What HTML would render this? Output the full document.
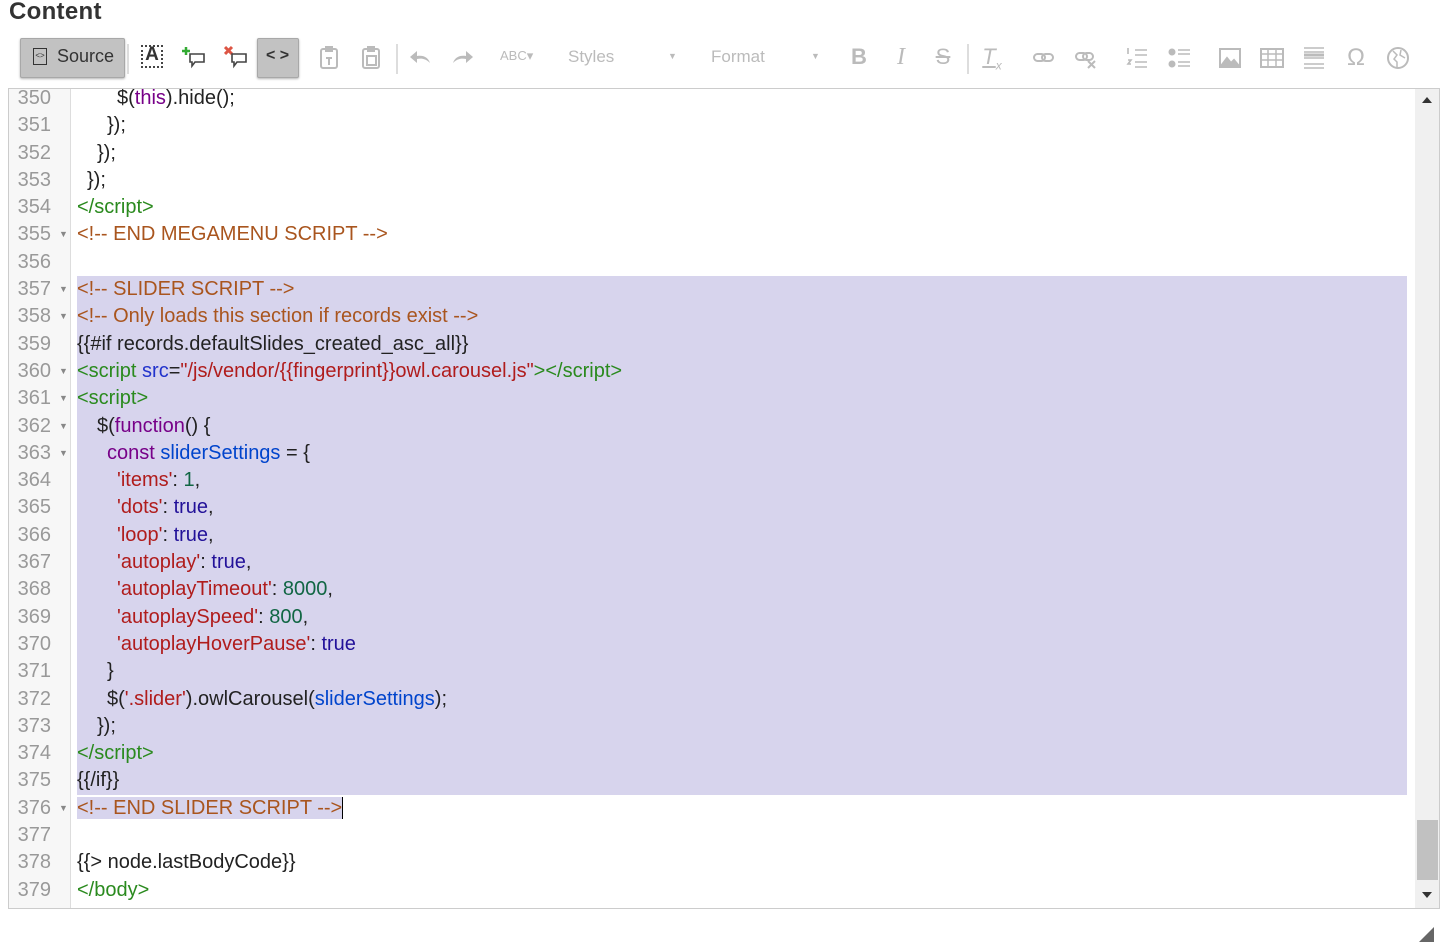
<!DOCTYPE html>
<html><head><meta charset="utf-8"><style>
body{margin:0;width:1450px;height:944px;background:#fff;font-family:"Liberation Sans",sans-serif;position:relative;overflow:hidden}
h1{position:absolute;left:9px;top:-2px;margin:0;font-size:24px;font-weight:bold;color:#333;letter-spacing:.3px}
.btn{position:absolute;top:38px;height:38px;background:#c2c2c2;border:1px solid #a8a8a8;border-radius:2px;box-shadow:0 1px 2px rgba(0,0,0,.3)}
.ic{position:absolute;top:44px;font-size:20px;color:#bbb;text-align:center;width:30px}
svg.s{position:absolute;top:45px;width:26px;height:26px;fill:none;stroke:#bbb;stroke-width:2}
.sep{position:absolute;top:44px;width:2px;height:30px;background:#ddd}
.ed{position:absolute;left:8px;top:88px;width:1430px;height:819px;border:1px solid #ccc;overflow:hidden}
.gut{position:absolute;left:0;top:0;width:61px;height:100%;background:#f7f7f7;border-right:1px solid #ddd}
.code{position:absolute;left:0;top:-4px;width:1398px}
.l{height:27.3px;line-height:27.3px;font-size:20px;white-space:pre;position:relative;color:#222}
.n{position:absolute;left:0;width:42px;text-align:right;color:#999}
.f{position:absolute;left:50px;font-size:9px;color:#888}
.t{position:absolute;left:68px}
.sel{background:#d7d4ed}
.cm{color:#a9551e}.tg{color:#2a8a1e}.at{color:#2233cc}.st{color:#b01c1c}.kw{color:#770088}.df{color:#0044cc}.nm{color:#116644}.bl{color:#221199}
.sb{position:absolute;right:0;top:0;width:24px;height:100%;background:#f0f0f0}
</style></head><body>
<h1>Content</h1>
<div class="btn" style="left:20px;width:103px"></div>
<div style="position:absolute;left:33px;top:48px;width:14px;height:17px;border:1.5px solid #333;box-sizing:border-box;font-size:8px;line-height:14px;text-align:center;color:#333">&lt;&gt;</div>
<div style="position:absolute;left:57px;top:46px;font-size:18px;color:#333">Source</div>
<div class="sep" style="left:127px"></div>
<div style="position:absolute;left:141px;top:45px;width:22px;height:23px;border:2px dotted #444;box-sizing:border-box"></div>
<div style="position:absolute;left:141px;top:44px;width:22px;text-align:center;font-size:19px;font-weight:bold;color:#333">A</div>
<svg class="s" style="left:182px" viewBox="0 0 26 26"><path d="M4 2v8M0 6h8" stroke="#3a3" stroke-width="2.5"/><path d="M8 9h14v8h-9l-3 4v-4H8z" stroke="#444" stroke-width="1.6"/></svg>
<svg class="s" style="left:224px" viewBox="0 0 26 26"><path d="M1 2l7 7M8 2l-7 7" stroke="#d54" stroke-width="3"/><path d="M8 9h14v8h-9l-3 4v-4H8z" stroke="#444" stroke-width="1.6"/></svg>
<div class="btn" style="left:257px;width:40px"></div>
<div style="position:absolute;left:266px;top:47px;font-size:16px;font-weight:bold;color:#333">&lt; &gt;</div>
<svg class="s" style="left:317px" viewBox="0 0 26 26"><rect x="4" y="4" width="16" height="19" rx="2"/><rect x="9" y="2" width="6" height="4"/><path d="M9 13h6M12 13v7"/></svg>
<svg class="s" style="left:359px" viewBox="0 0 26 26"><rect x="4" y="4" width="16" height="19" rx="2"/><rect x="9" y="2" width="6" height="4"/><rect x="8" y="11" width="9" height="9"/></svg>
<div class="sep" style="left:396px"></div>
<svg class="s" style="left:408px" viewBox="0 0 26 26"><path d="M22 18c-2-6-7-8-13-7V6L2 12l7 6v-4c5-1 9 0 13 4z" fill="#bbb" stroke="none"/></svg>
<svg class="s" style="left:449px" viewBox="0 0 26 26"><path d="M4 18c2-6 7-8 13-7V6l7 6-7 6v-4c-5-1-9 0-13 4z" fill="#bbb" stroke="none"/></svg>
<div class="ic" style="left:500px;font-size:13px;top:48px">ABC▾</div>
<div style="position:absolute;left:568px;top:47px;font-size:17px;color:#bbb">Styles</div>
<div style="position:absolute;left:668px;top:51px;font-size:9px;color:#bbb">▼</div>
<div style="position:absolute;left:711px;top:47px;font-size:17px;color:#bbb">Format</div>
<div style="position:absolute;left:811px;top:51px;font-size:9px;color:#bbb">▼</div>
<div class="ic" style="left:844px;font-weight:bold;font-size:22px">B</div>
<div class="ic" style="left:886px;font-style:italic;font-family:'Liberation Serif';font-size:24px">I</div>
<div class="ic" style="left:928px;font-size:22px"><s>S</s></div>
<div class="sep" style="left:967px"></div>
<div class="ic" style="left:977px;font-style:italic;text-decoration:underline;font-size:22px">T<sub style="font-size:12px">x</sub></div>
<svg class="s" style="left:1031px" viewBox="0 0 26 26"><rect x="3" y="9" width="11" height="7" rx="3.5"/><rect x="11" y="9" width="11" height="7" rx="3.5"/></svg>
<svg class="s" style="left:1073px" viewBox="0 0 26 26"><rect x="3" y="8" width="11" height="7" rx="3.5"/><rect x="10" y="8" width="10" height="7" rx="3.5"/><path d="M15 16l7 7M22 16l-7 7"/></svg>
<svg class="s" style="left:1124px" viewBox="0 0 26 26"><path d="M11 5h12M11 10h12M11 17h12M11 22h12M4 3v6M4 15h3l-3 4h3" stroke-width="1.6"/></svg>
<svg class="s" style="left:1167px" viewBox="0 0 26 26"><circle cx="5" cy="7" r="2.5" fill="#bbb"/><circle cx="5" cy="19" r="2.5" fill="#bbb"/><path d="M11 5h12M11 9h12M11 17h12M11 21h12" stroke-width="1.6"/></svg>
<svg class="s" style="left:1217px" viewBox="0 0 26 26"><rect x="3" y="4" width="20" height="18"/><path d="M4 21l6-8 4 5 3-3 5 6z" fill="#bbb"/></svg>
<svg class="s" style="left:1259px" viewBox="0 0 26 26"><rect x="2" y="4" width="22" height="18"/><path d="M2 9h22M2 15h22M9 4v18M17 4v18" stroke-width="1.5"/></svg>
<svg class="s" style="left:1301px" viewBox="0 0 26 26"><path d="M3 3h20M3 7h20M3 13h20M3 19h20M3 23h20" stroke-width="1.4"/><path d="M3 10h20" stroke-width="3"/></svg>
<div class="ic" style="left:1341px;font-size:24px">Ω</div>
<svg class="s" style="left:1385px" viewBox="0 0 26 26"><circle cx="13" cy="13" r="10"/><path d="M8 6l4 4-3 4 3 3v5M16 5l-1 5 5 3" stroke-width="1.5"/></svg>
<div class="ed">
<div class="gut"></div>
<div class="code">
<div class="l"><span class="n">350</span><span class="t" style="padding-left:40px">$(<span class="kw">this</span>).hide();</span></div>
<div class="l"><span class="n">351</span><span class="t" style="padding-left:30px">});</span></div>
<div class="l"><span class="n">352</span><span class="t" style="padding-left:20px">});</span></div>
<div class="l"><span class="n">353</span><span class="t" style="padding-left:10px">});</span></div>
<div class="l"><span class="n">354</span><span class="t tg">&lt;/script&gt;</span></div>
<div class="l"><span class="n">355</span><span class="f">▼</span><span class="t cm">&lt;!-- END MEGAMENU SCRIPT --&gt;</span></div>
<div class="l"><span class="n">356</span></div>
<div class="l"><span class="sel" style="position:absolute;left:68px;right:0;top:0;bottom:0"></span><span class="n">357</span><span class="f">▼</span><span class="t cm">&lt;!-- SLIDER SCRIPT --&gt;</span></div>
<div class="l"><span class="sel" style="position:absolute;left:68px;right:0;top:0;bottom:0"></span><span class="n">358</span><span class="f">▼</span><span class="t cm">&lt;!-- Only loads this section if records exist --&gt;</span></div>
<div class="l"><span class="sel" style="position:absolute;left:68px;right:0;top:0;bottom:0"></span><span class="n">359</span><span class="t">{{#if records.defaultSlides_created_asc_all}}</span></div>
<div class="l"><span class="sel" style="position:absolute;left:68px;right:0;top:0;bottom:0"></span><span class="n">360</span><span class="f">▼</span><span class="t"><span class="tg">&lt;script</span> <span class="at">src</span>=<span class="st">"/js/vendor/{{fingerprint}}owl.carousel.js"</span><span class="tg">&gt;&lt;/script&gt;</span></span></div>
<div class="l"><span class="sel" style="position:absolute;left:68px;right:0;top:0;bottom:0"></span><span class="n">361</span><span class="f">▼</span><span class="t tg">&lt;script&gt;</span></div>
<div class="l"><span class="sel" style="position:absolute;left:68px;right:0;top:0;bottom:0"></span><span class="n">362</span><span class="f">▼</span><span class="t" style="padding-left:20px">$(<span class="kw">function</span>() {</span></div>
<div class="l"><span class="sel" style="position:absolute;left:68px;right:0;top:0;bottom:0"></span><span class="n">363</span><span class="f">▼</span><span class="t" style="padding-left:30px"><span class="kw">const</span> <span class="df">sliderSettings</span> = {</span></div>
<div class="l"><span class="sel" style="position:absolute;left:68px;right:0;top:0;bottom:0"></span><span class="n">364</span><span class="t" style="padding-left:40px"><span class="st">'items'</span>: <span class="nm">1</span>,</span></div>
<div class="l"><span class="sel" style="position:absolute;left:68px;right:0;top:0;bottom:0"></span><span class="n">365</span><span class="t" style="padding-left:40px"><span class="st">'dots'</span>: <span class="bl">true</span>,</span></div>
<div class="l"><span class="sel" style="position:absolute;left:68px;right:0;top:0;bottom:0"></span><span class="n">366</span><span class="t" style="padding-left:40px"><span class="st">'loop'</span>: <span class="bl">true</span>,</span></div>
<div class="l"><span class="sel" style="position:absolute;left:68px;right:0;top:0;bottom:0"></span><span class="n">367</span><span class="t" style="padding-left:40px"><span class="st">'autoplay'</span>: <span class="bl">true</span>,</span></div>
<div class="l"><span class="sel" style="position:absolute;left:68px;right:0;top:0;bottom:0"></span><span class="n">368</span><span class="t" style="padding-left:40px"><span class="st">'autoplayTimeout'</span>: <span class="nm">8000</span>,</span></div>
<div class="l"><span class="sel" style="position:absolute;left:68px;right:0;top:0;bottom:0"></span><span class="n">369</span><span class="t" style="padding-left:40px"><span class="st">'autoplaySpeed'</span>: <span class="nm">800</span>,</span></div>
<div class="l"><span class="sel" style="position:absolute;left:68px;right:0;top:0;bottom:0"></span><span class="n">370</span><span class="t" style="padding-left:40px"><span class="st">'autoplayHoverPause'</span>: <span class="bl">true</span></span></div>
<div class="l"><span class="sel" style="position:absolute;left:68px;right:0;top:0;bottom:0"></span><span class="n">371</span><span class="t" style="padding-left:30px">}</span></div>
<div class="l"><span class="sel" style="position:absolute;left:68px;right:0;top:0;bottom:0"></span><span class="n">372</span><span class="t" style="padding-left:30px">$(<span class="st">'.slider'</span>).owlCarousel(<span class="df">sliderSettings</span>);</span></div>
<div class="l"><span class="sel" style="position:absolute;left:68px;right:0;top:0;bottom:0"></span><span class="n">373</span><span class="t" style="padding-left:20px">});</span></div>
<div class="l"><span class="sel" style="position:absolute;left:68px;right:0;top:0;bottom:0"></span><span class="n">374</span><span class="t tg">&lt;/script&gt;</span></div>
<div class="l"><span class="sel" style="position:absolute;left:68px;right:0;top:0;bottom:0"></span><span class="n">375</span><span class="t">{{/if}}</span></div>
<div class="l"><span class="n">376</span><span class="f">▼</span><span class="t cm"><span class="sel">&lt;!-- END SLIDER SCRIPT --&gt;</span><span style="border-left:1.5px solid #000"></span></span></div>
<div class="l"><span class="n">377</span></div>
<div class="l"><span class="n">378</span><span class="t">{{&gt; node.lastBodyCode}}</span></div>
<div class="l"><span class="n">379</span><span class="t tg">&lt;/body&gt;</span></div>
</div>
<div class="sb">
<div style="position:absolute;left:7px;top:8px;width:0;height:0;border-left:5px solid transparent;border-right:5px solid transparent;border-bottom:6px solid #333"></div>
<div style="position:absolute;left:2px;top:731px;width:21px;height:60px;background:#c1c1c1"></div>
<div style="position:absolute;left:7px;top:803px;width:0;height:0;border-left:5px solid transparent;border-right:5px solid transparent;border-top:6px solid #333"></div>
</div>
</div>
<div style="position:absolute;left:1419px;top:927px;width:0;height:0;border-left:15px solid transparent;border-bottom:15px solid #666"></div>
</body></html>
